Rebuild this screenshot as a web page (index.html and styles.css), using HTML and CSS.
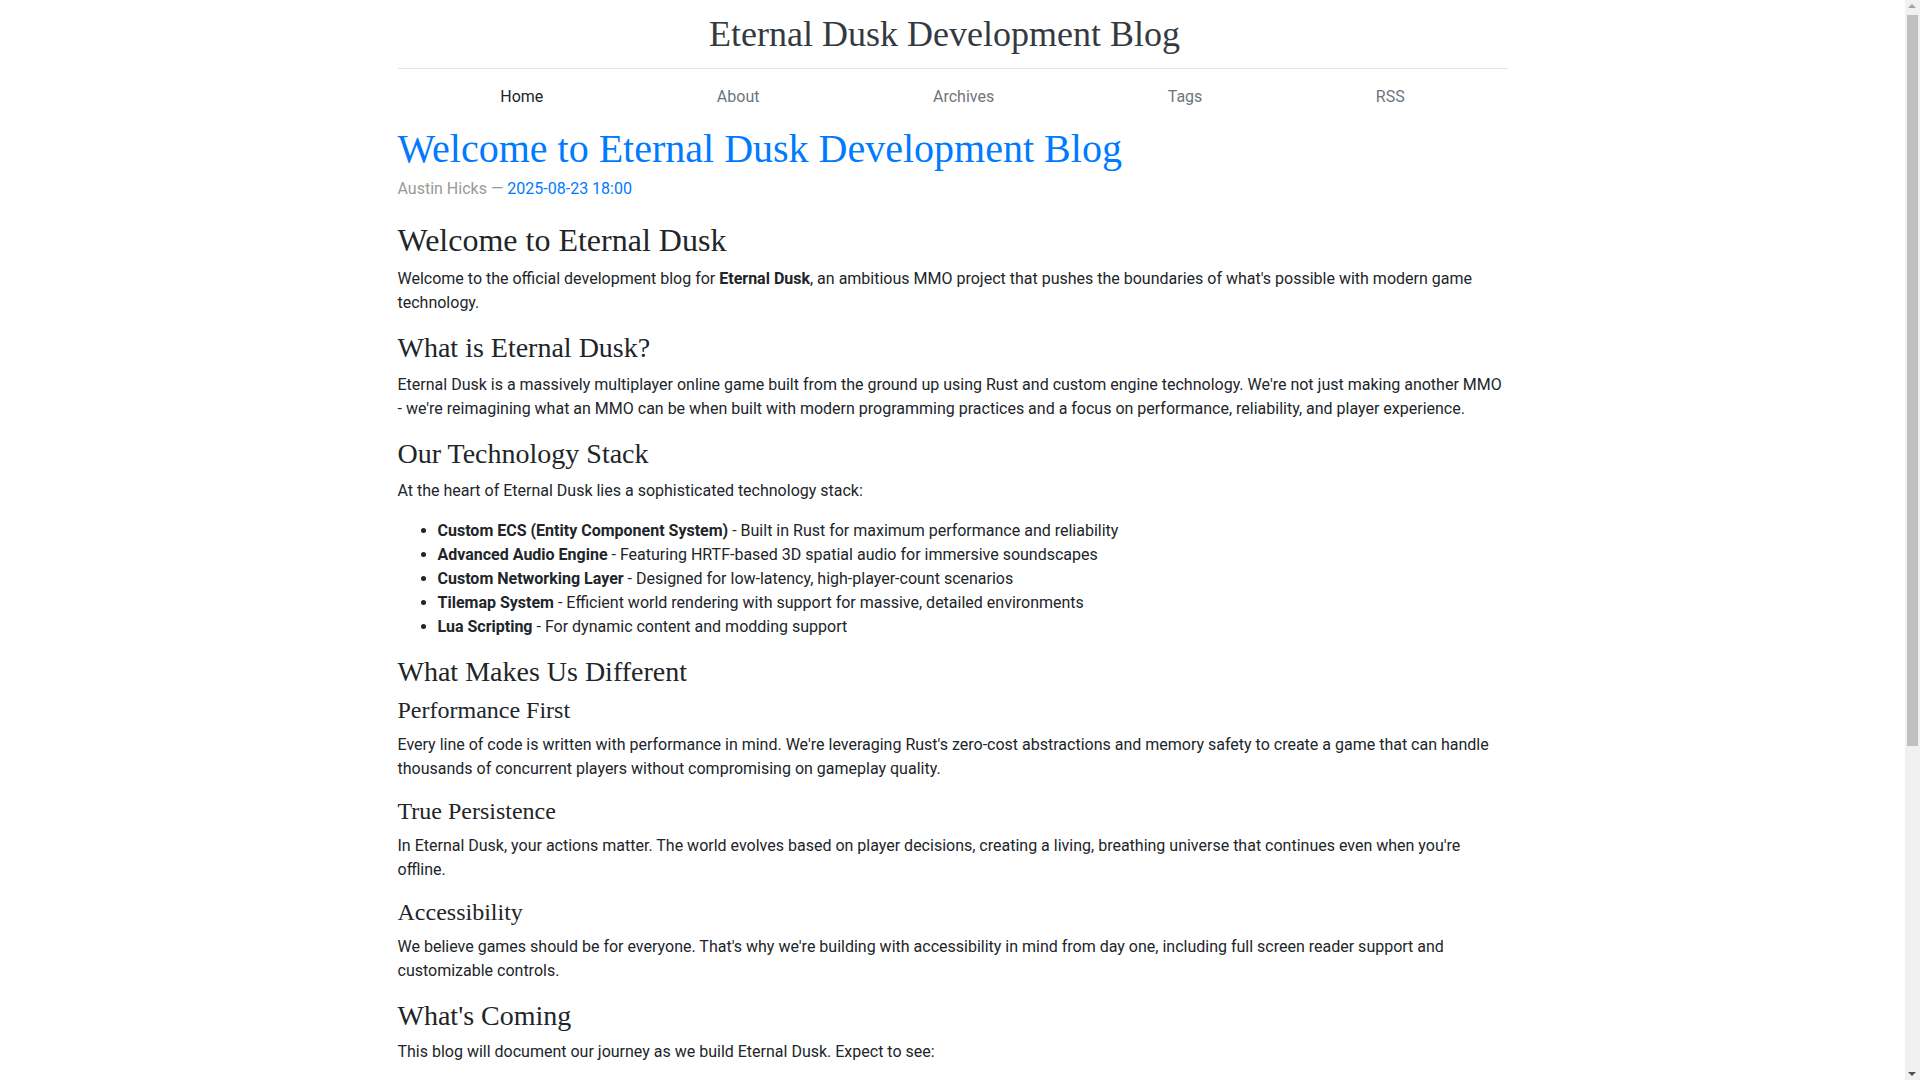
FILE: index.html
```html
<!DOCTYPE html>
<html lang="en">
<head>
<meta charset="utf-8">
<title>Welcome to Eternal Dusk Development Blog | Eternal Dusk Development Blog</title>
<link rel="stylesheet" href="styles.css">
</head>
<body>
<div class="container">
  <header class="blog-header">
    <a class="blog-header-logo" href="#">Eternal Dusk Development Blog</a>
  </header>
  <nav class="nav-scroller">
    <div class="nav">
      <a class="nav-link active" href="#">Home</a>
      <a class="nav-link" href="#">About</a>
      <a class="nav-link" href="#">Archives</a>
      <a class="nav-link" href="#">Tags</a>
      <a class="nav-link" href="#">RSS</a>
    </div>
  </nav>
</div>

<main class="container">
  <article class="post">
    <h1 class="post-title"><a href="#">Welcome to Eternal Dusk Development Blog</a></h1>
    <p class="post-meta">Austin Hicks — <a href="#">2025-08-23 18:00</a></p>

    <div class="post-body">
      <h2>Welcome to Eternal Dusk</h2>
      <p>Welcome to the official development blog for <strong>Eternal Dusk</strong>, an ambitious MMO project that pushes the boundaries of what's possible with modern game technology.</p>

      <h3>What is Eternal Dusk?</h3>
      <p>Eternal Dusk is a massively multiplayer online game built from the ground up using Rust and custom engine technology. We're not just making another MMO - we're reimagining what an MMO can be when built with modern programming practices and a focus on performance, reliability, and player experience.</p>

      <h3>Our Technology Stack</h3>
      <p>At the heart of Eternal Dusk lies a sophisticated technology stack:</p>
      <ul>
        <li><strong>Custom ECS (Entity Component System)</strong> - Built in Rust for maximum performance and reliability</li>
        <li><strong>Advanced Audio Engine</strong> - Featuring HRTF-based 3D spatial audio for immersive soundscapes</li>
        <li><strong>Custom Networking Layer</strong> - Designed for low-latency, high-player-count scenarios</li>
        <li><strong>Tilemap System</strong> - Efficient world rendering with support for massive, detailed environments</li>
        <li><strong>Lua Scripting</strong> - For dynamic content and modding support</li>
      </ul>

      <h3>What Makes Us Different</h3>
      <h4>Performance First</h4>
      <p>Every line of code is written with performance in mind. We're leveraging Rust's zero-cost abstractions and memory safety to create a game that can handle thousands of concurrent players without compromising on gameplay quality.</p>

      <h4>True Persistence</h4>
      <p>In Eternal Dusk, your actions matter. The world evolves based on player decisions, creating a living, breathing universe that continues even when you're offline.</p>

      <h4>Accessibility</h4>
      <p>We believe games should be for everyone. That's why we're building with accessibility in mind from day one, including full screen reader support and customizable controls.</p>

      <h3>What's Coming</h3>
      <p>This blog will document our journey as we build Eternal Dusk. Expect to see:</p>
      <ul>
        <li><strong>Technical Deep Dives</strong> - Detailed explanations of our engine architecture and design decisions</li>
        <li><strong>Development Updates</strong> - Regular progress reports on new features and systems</li>
        <li><strong>Behind the Scenes</strong> - Insights into our development process and challenges</li>
        <li><strong>Community Features</strong> - Spotlights on player feedback and community contributions</li>
      </ul>

      <h3>Get Involved</h3>
      <p>We're excited to share this journey with you. Whether you're a player, a developer, or just curious about how modern MMOs are built, we hope you'll find something interesting here.</p>
      <p>Stay tuned for our first technical deep dive, where we'll explore how our ECS architecture enables the performance we need for a truly massive multiplayer experience.</p>
    </div>
  </article>
</main>

<footer class="blog-footer">
  <p>Contents © 2025 <a href="#">Austin Hicks</a> - Powered by <a href="#">Nikola</a></p>
</footer>

<div class="scrollbar" aria-hidden="true">
  <span class="sb-arrow sb-up"></span>
  <span class="sb-thumb"></span>
  <span class="sb-arrow sb-down"></span>
</div>
</body>
</html>
```

FILE: styles.css
```css
html {
  box-sizing: border-box;
}
*, *::before, *::after {
  box-sizing: inherit;
}
body {
  margin: 0 15px 0 0;
  font-family: Roboto, "Liberation Sans", sans-serif;
  font-size: 16px;
  line-height: 1.5;
  color: #212529;
  background: #fff;
}
a {
  color: #007bff;
  text-decoration: none;
}
.container {
  width: 1140px;
  padding: 0 15px;
  margin: 0 auto;
}
.blog-header {
  display: flex;
  justify-content: center;
  padding: 16px 0;
  line-height: 1;
  border-bottom: 1px solid #e5e5e5;
}
.blog-header-logo {
  font-family: "Liberation Serif", "Times New Roman", serif;
  font-size: 36px;
  line-height: 36px;
  color: #343a40;
  margin-right: 16px;
}
.nav-scroller {
  height: 44px;
  overflow: hidden;
}
.nav {
  display: flex;
  justify-content: space-around;
  padding: 0 16px;
  margin-top: -1px;
}
.nav-link {
  padding: 17px 0 15px;
  line-height: 24px;
  color: #6c757d;
}
.nav-link.active {
  color: #212529;
}
.post-title {
  margin: 12px 0 4px;
  font-family: "Liberation Serif", "Times New Roman", serif;
  font-weight: 500;
  font-size: 40px;
  line-height: 1.2;
}
.post-meta {
  margin: 0 0 20px;
  color: #999;
}
.post-body h2,
.post-body h3,
.post-body h4 {
  margin: 0 0 8px;
  font-family: "Liberation Serif", "Times New Roman", serif;
  font-weight: 500;
  line-height: 1.2;
}
.post-body h2 { font-size: 32px; }
.post-body h3 { font-size: 28px; }
.post-body h4 { font-size: 24px; }
.post-body p {
  margin: 0 0 16px;
}
.post-body ul {
  margin: 0 0 16px;
  padding-left: 40px;
}
.post-body strong {
  font-weight: 700;
}
.blog-footer {
  padding: 40px 0;
  text-align: center;
  color: #999;
}
.blog-footer p {
  margin: 0;
}

/* emulated browser scrollbar */
.scrollbar {
  position: fixed;
  top: 0;
  right: 0;
  width: 15px;
  height: 100vh;
  background: #f1f1f1;
}
.sb-thumb {
  position: absolute;
  top: 15px;
  left: 2px;
  width: 11px;
  height: 731px;
  background: #c1c1c1;
}
.sb-arrow {
  position: absolute;
  left: 3px;
  width: 0;
  height: 0;
  border-left: 4.5px solid transparent;
  border-right: 4.5px solid transparent;
}
.sb-up {
  top: 4px;
  border-bottom: 4px solid #a3a3a3;
}
.sb-down {
  bottom: 4px;
  border-top: 4px solid #505050;
}
```
